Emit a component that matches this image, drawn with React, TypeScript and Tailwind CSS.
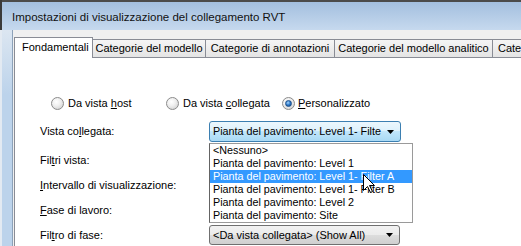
import React from "react";

const FONT = { fontFamily: '"Liberation Sans", Arial, sans-serif' };

function Radio({ checked }: { checked?: boolean }) {
  return (
    <div className="w-[13px] h-[13px] rounded-full border border-[#8b8b8b] bg-[radial-gradient(circle_at_40%_35%,#ffffff_0%,#f0f0f0_40%,#c9c9c9_100%)] flex items-center justify-center shrink-0">
      {checked && (
        <div className="w-[7px] h-[7px] rounded-full bg-[radial-gradient(circle_at_40%_35%,#a6d6ff_0%,#2d79c9_50%,#0e3f7c_100%)] border border-[#1c4f8a]" />
      )}
    </div>
  );
}

function Arrow() {
  return (
    <svg width="7" height="4" viewBox="0 0 7 4" className="shrink-0">
      <path d="M0 0 H7 L3.5 4 Z" fill="#000" />
    </svg>
  );
}

const items = [
  "<Nessuno>",
  "Pianta del pavimento: Level 1",
  "Pianta del pavimento: Level 1- Filter A",
  "Pianta del pavimento: Level 1- Filter B",
  "Pianta del pavimento: Level 2",
  "Pianta del pavimento: Site",
];

export default function App() {
  return (
    <div
      className="relative w-[521px] h-[246px] overflow-hidden flex flex-col bg-[#f0f0f0] text-black"
      style={FONT}
    >
      {/* Title bar */}
      <div className="h-[30px] flex shrink-0">
        <div className="w-[2px] bg-[#3a3a3a]" />
        <div className="flex-1 border-t-2 border-[#4b4b4b] bg-[linear-gradient(#a3bfdf,#c6d9ee)] flex items-center pl-[10px] pt-[3px] text-[11.5px] text-[#111]">
          Impostazioni di visualizzazione del collegamento RVT
        </div>
      </div>

      <div className="flex flex-1">
        {/* left frame */}
        <div className="flex shrink-0">
          <div className="w-[2px] bg-[#e3eaf2]" />
          <div className="w-[10px] bg-[linear-gradient(#dce6f1,#bcd3eb_30%,#bcd3eb)]" />
          <div className="w-[1px] bg-[#8da2b9]" />
        </div>

        {/* client */}
        <div className="flex-1 flex flex-col pl-[1px] pt-[7px]">
          {/* tabs */}
          <div className="flex items-end h-[20px] text-[11px] relative z-10">
            <div className="w-[79px] h-[21px] -mb-px bg-white border border-b-0 border-[#898c95] flex items-center pl-[7px] pb-[2px] whitespace-nowrap">
              Fondamentali
            </div>
            <div className="w-[113px] h-[18px] border-t border-r border-[#898c95] bg-[linear-gradient(#f5f5f5,#e4e4e4)] flex items-center justify-center whitespace-nowrap">
              Categorie del modello
            </div>
            <div className="w-[129px] h-[18px] border-t border-r border-[#898c95] bg-[linear-gradient(#f5f5f5,#e4e4e4)] flex items-center justify-center whitespace-nowrap">
              Categorie di annotazioni
            </div>
            <div className="w-[158px] h-[18px] border-t border-r border-[#898c95] bg-[linear-gradient(#f5f5f5,#e4e4e4)] flex items-center justify-center whitespace-nowrap">
              Categorie del modello analitico
            </div>
            <div className="flex-1 h-[18px] border-t border-[#898c95] bg-[linear-gradient(#f5f5f5,#e4e4e4)] flex items-center pl-[5px] whitespace-nowrap overflow-hidden">
              Cate
            </div>
          </div>

          {/* pane */}
          <div className="flex-1 bg-white border-l border-t border-[#898c95] text-[11px] flex flex-col">
            {/* radios */}
            <div className="flex items-center h-[13px] mt-[39px] pl-[36px]">
              <div className="w-[115px] flex items-center gap-[4px]">
                <Radio />
                <span>
                  Da vista <u className="underline-offset-[1px]">h</u>ost
                </span>
              </div>
              <div className="w-[116px] flex items-center gap-[4px]">
                <Radio />
                <span>
                  Da vista <u className="underline-offset-[1px]">c</u>ollegata
                </span>
              </div>
              <div className="flex items-center gap-[3px]">
                <Radio checked />
                <span>
                  <u className="underline-offset-[1px]">P</u>ersonalizzato
                </span>
              </div>
            </div>

            {/* form */}
            <div className="flex flex-col pl-[25px] mt-[11px]">
              <div className="flex items-center h-[21px]">
                <div className="w-[169px]">
                  Vista co<u className="underline-offset-[1px]">l</u>legata:
                </div>
                <div className="w-[192px] h-[21px] border border-[#3c7fb1] rounded-[3px] bg-[linear-gradient(#ecf7fd,#dcf1fc_50%,#c1e6fb_50%,#a9d9f4)] flex items-center pl-[3px] pr-[6px]">
                  <span className="flex-1 overflow-hidden whitespace-nowrap mr-[3px] text-[10.75px]">
                    Pianta del pavimento: Level 1- Filte
                  </span>
                  <Arrow />
                </div>
              </div>
              <div className="flex items-center h-[21px] mt-[8px]">
                <div className="w-[169px]">
                  Fil<u className="underline-offset-[1px]">t</u>ri vista:
                </div>
              </div>
              <div className="flex items-center h-[21px] mt-[4px]">
                <div className="w-[169px]">
                  <u className="underline-offset-[1px]">I</u>ntervallo di visualizzazione:
                </div>
              </div>
              <div className="flex items-center h-[21px] mt-[4px]">
                <div className="w-[169px]">
                  <u className="underline-offset-[1px]">F</u>ase di lavoro:
                </div>
              </div>
              <div className="flex items-center h-[20px] mt-[4px]">
                <div className="w-[169px]">
                  Fil<u className="underline-offset-[1px]">t</u>ro di fase:
                </div>
                <div className="w-[191px] h-[20px] border border-[#707070] rounded-[3px] bg-[linear-gradient(#f2f2f2,#ebebeb_50%,#dddddd_50%,#cfcfcf)] flex items-center pl-[3px] pr-[6px]">
                  <span className="flex-1 overflow-hidden whitespace-nowrap">
                    &lt;Da vista collegata&gt; (Show All)
                  </span>
                  <Arrow />
                </div>
              </div>
            </div>
          </div>
        </div>
      </div>

      {/* dropdown list */}
      <div className="absolute left-[209px] top-[143px] w-[204px] bg-white border border-[#9a9a9a] border-l-[#646464] text-[10.75px] z-20">
        {items.map((t, i) => (
          <div
            key={t}
            className={
              i === 2
                ? "h-[13px] leading-[13px] pl-[3px] whitespace-nowrap bg-[#3399ff] text-white"
                : "h-[13px] leading-[13px] pl-[3px] whitespace-nowrap"
            }
          >
            {t}
          </div>
        ))}
      </div>

      {/* mouse cursor */}
      <svg
        className="absolute left-[363px] top-[174px] z-30"
        width="13"
        height="20"
        viewBox="0 0 13 20"
      >
        <path
          d="M0.5 0.5 L0.5 16.5 L4.5 12.5 L7.5 18.5 L9.5 17.5 L6.5 11.5 L11.5 11.5 Z"
          fill="#fff"
          stroke="#000"
          strokeWidth="1"
          strokeLinejoin="miter"
        />
      </svg>
    </div>
  );
}
